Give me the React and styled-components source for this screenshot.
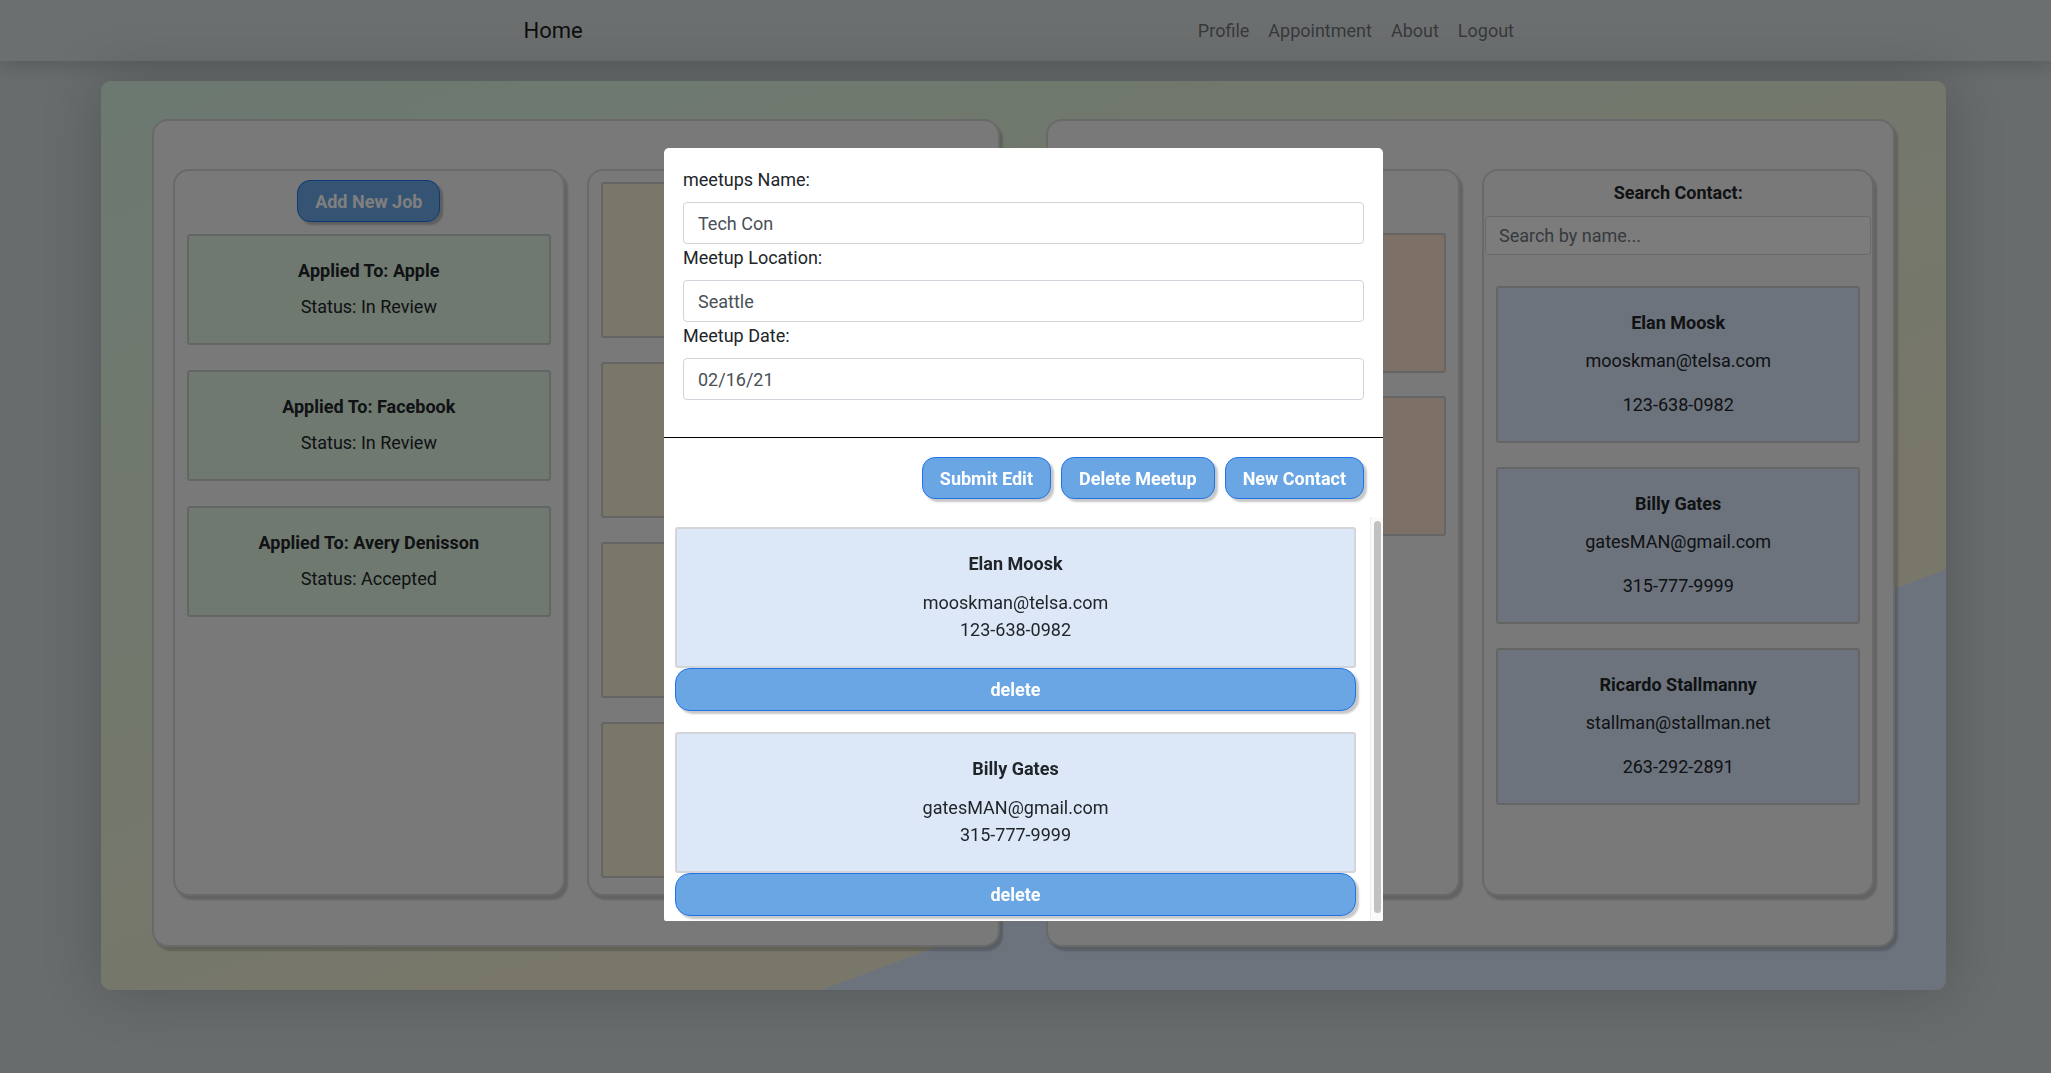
import React from 'react';
import styled, { createGlobalStyle } from 'styled-components';

const GlobalStyle = createGlobalStyle`
  * {
    box-sizing: border-box;
  }
  body {
    margin: 0;
    background: #d0d8da;
    font-family: Roboto, "Liberation Sans", Arial, sans-serif;
    color: #212529;
  }
`;

const Page = styled.div`
  min-height: 100vh;
`;

const NavBar = styled.nav`
  position: relative;
  height: 61px;
  background: #d6dee0;
  box-shadow: 0 4px 18px rgba(0, 0, 0, 0.16);
`;

const NavInner = styled.div`
  width: 1000px;
  height: 100%;
  margin: 0 auto;
  display: flex;
  align-items: center;
  justify-content: space-between;
  transform: translateX(-2px);
`;

const Brand = styled.a`
  font-size: 22px;
  color: rgba(0, 0, 0, 0.9);
  text-decoration: none;
`;

const NavLinks = styled.div`
  display: flex;
`;

const NavLink = styled.a`
  padding: 0 9.5px;
  font-size: 18px;
  color: rgba(0, 0, 0, 0.5);
  text-decoration: none;
`;

const Board = styled.main`
  width: 90%;
  height: 909px;
  margin: 20px auto 0;
  transform: translateX(-2px);
  padding: 38px 51px 43px;
  border-radius: 10px;
  background: linear-gradient(159.5deg, #d8f3e1 0%, #f3eed3 73.7%, #dae6f8 73.7%, #dae6f8 100%);
  box-shadow: 0 0 60px rgba(0, 0, 0, 0.2);
  display: grid;
  grid-template-columns: 1fr 1fr;
  grid-template-rows: minmax(0, 1fr);
  gap: 46px;
`;

const Panel = styled.section`
  display: flex;
  gap: 22px;
  padding: 48px 19px 49px;
  background: #f2f2f2;
  border: 2px solid #d2d2d2;
  border-radius: 16px;
  box-shadow: 3px 4px 2px rgba(0, 0, 0, 0.18);
`;

const Column = styled.div`
  flex: 1;
  display: flex;
  flex-direction: column;
  padding-top: ${(p) => p.$top || 9}px;
  background: #f2f2f2;
  border: 2px solid #d2d2d2;
  border-radius: 16px;
  box-shadow: 3px 4px 2px rgba(0, 0, 0, 0.18);
`;

const BlueButton = styled.button`
  height: ${(p) => p.$h || 42}px;
  padding: 0 17px;
  background: #6aa6e4;
  border: 1px solid #1f72e8;
  border-radius: 13px;
  box-shadow: 3px 3px 2px rgba(0, 0, 0, 0.22);
  color: #fff;
  font-family: inherit;
  font-size: 18px;
  font-weight: 700;
  cursor: pointer;
`;

const HeaderButton = styled(BlueButton)`
  align-self: center;
  margin-bottom: 12px;
`;

const ColumnTitle = styled.h4`
  margin: 0 0 10px;
  font-size: 18px;
  line-height: 26px;
  font-weight: 700;
  text-align: center;
`;

const SearchInput = styled.input`
  height: 39px;
  margin: 0 1px 31px;
  padding: 0 13px;
  background: #f9f9f9;
  border: 1px solid #d4d4d4;
  border-radius: 4px;
  font-family: inherit;
  font-size: 18px;
  color: #495057;

  &::placeholder {
    color: #6c757d;
  }
`;

const Card = styled.div`
  min-height: ${(p) => p.$minH || 0}px;
  margin: 0 12px ${(p) => p.$gap || 24}px;
  padding: 22px 16px ${(p) => p.$bottom || 23}px;
  background: ${(p) => p.$tone};
  border: 2px solid #cbcbcb;
  border-radius: 3px;
  text-align: center;

  &:last-child {
    margin-bottom: 0;
  }
`;

const CardTitle = styled.h5`
  margin: 0 0 ${(p) => p.$mb || 10}px;
  font-size: 18px;
  line-height: 26px;
  font-weight: 700;
`;

const CardText = styled.p`
  margin: 0 0 ${(p) => p.$mb || 0}px;
  font-size: 18px;
  line-height: 26px;
`;

const Backdrop = styled.div`
  position: fixed;
  inset: 0;
  background: rgba(0, 0, 0, 0.5);
`;

const Modal = styled.div`
  position: fixed;
  top: 148px;
  left: calc(50% - 361.5px);
  width: 719px;
  height: 773px;
  display: flex;
  flex-direction: column;
  background: #fff;
  border-radius: 5px 5px 2px 2px;
  overflow: hidden;
`;

const Form = styled.form`
  padding: 18px 19px 37px;
  border-bottom: 1px solid #000;
`;

const Label = styled.label`
  display: block;
  margin-bottom: 8px;
  font-size: 18px;
  line-height: 28px;
`;

const Field = styled.input`
  display: block;
  width: 100%;
  height: 42px;
  padding: 0 14px;
  border: 1px solid #ced4da;
  border-radius: 4px;
  font-family: inherit;
  font-size: 18px;
  color: #495057;
`;

const ButtonRow = styled.div`
  display: flex;
  justify-content: flex-end;
  gap: 10px;
  padding: 19px 19px 0;
`;

const ContactArea = styled.div`
  flex: 1;
  min-height: 0;
  margin-top: 18px;
  display: flex;
`;

const ContactList = styled.div`
  flex: 1;
  overflow: hidden;
  padding: 10px 14px 17px 11px;
`;

const ScrollTrack = styled.div`
  width: 13px;
  padding: 4px 2px 8px 3px;
  background: #fafafa;
  border-left: 1px solid #ececec;
`;

const ScrollThumb = styled.div`
  height: 100%;
  background: #c1c1c1;
  border-radius: 4px;
`;

const ContactBlock = styled.div`
  margin-bottom: 21px;

  &:last-child {
    margin-bottom: 0;
  }
`;

const ModalCard = styled.div`
  padding: 22px 16px 23px;
  background: #dce8f8;
  border: 2px solid #d3d5d9;
  border-radius: 3px;
  text-align: center;
`;

const ModalName = styled.h5`
  margin: 0 0 12px;
  font-size: 18px;
  line-height: 26px;
  font-weight: 700;
`;

const ModalLine = styled.p`
  margin: 0;
  font-size: 18px;
  line-height: 27px;
`;

const DeleteButton = styled(BlueButton)`
  display: block;
  width: 100%;
  border-radius: 15px;
`;

const jobs = [
  { company: 'Apple', status: 'In Review' },
  { company: 'Facebook', status: 'In Review' },
  { company: 'Avery Denisson', status: 'Accepted' },
];

const interviewCards = [1, 2, 3, 4];
const meetupCards = [1, 2];

const contacts = [
  { name: 'Elan Moosk', email: 'mooskman@telsa.com', phone: '123-638-0982' },
  { name: 'Billy Gates', email: 'gatesMAN@gmail.com', phone: '315-777-9999' },
  { name: 'Ricardo Stallmanny', email: 'stallman@stallman.net', phone: '263-292-2891' },
];

const App = () => (
  <Page>
    <GlobalStyle />
    <NavBar>
      <NavInner>
        <Brand href="#">Home</Brand>
        <NavLinks>
          <NavLink href="#">Profile</NavLink>
          <NavLink href="#">Appointment</NavLink>
          <NavLink href="#">About</NavLink>
          <NavLink href="#">Logout</NavLink>
        </NavLinks>
      </NavInner>
    </NavBar>

    <Board>
      <Panel>
        <Column>
          <HeaderButton>Add New Job</HeaderButton>
          {jobs.map((job) => (
            <Card key={job.company} $tone="#dff2e1" $gap={25}>
              <CardTitle>Applied To: {job.company}</CardTitle>
              <CardText>Status: {job.status}</CardText>
            </Card>
          ))}
        </Column>
        <Column $top={11}>
          {interviewCards.map((id) => (
            <Card key={id} $tone="#f4eed3" $minH={156} />
          ))}
        </Column>
      </Panel>

      <Panel>
        <Column $top={62}>
          {meetupCards.map((id) => (
            <Card key={id} $tone="#f9e0cf" $minH={140} $gap={23} />
          ))}
        </Column>
        <Column>
          <ColumnTitle>Search Contact:</ColumnTitle>
          <SearchInput placeholder="Search by name..." />
          {contacts.map((c) => (
            <Card key={c.name} $tone="#d9e6f9">
              <CardTitle $mb={12}>{c.name}</CardTitle>
              <CardText $mb={18}>{c.email}</CardText>
              <CardText>{c.phone}</CardText>
            </Card>
          ))}
        </Column>
      </Panel>
    </Board>

    <Backdrop />
    <Modal>
      <Form>
        <Label>meetups Name:</Label>
        <Field defaultValue="Tech Con" />
        <Label>Meetup Location:</Label>
        <Field defaultValue="Seattle" />
        <Label>Meetup Date:</Label>
        <Field defaultValue="02/16/21" />
      </Form>
      <ButtonRow>
        <BlueButton type="button">Submit Edit</BlueButton>
        <BlueButton type="button">Delete Meetup</BlueButton>
        <BlueButton type="button">New Contact</BlueButton>
      </ButtonRow>
      <ContactArea>
        <ContactList>
          {contacts.slice(0, 2).map((c) => (
            <ContactBlock key={c.name}>
              <ModalCard>
                <ModalName>{c.name}</ModalName>
                <ModalLine>{c.email}</ModalLine>
                <ModalLine>{c.phone}</ModalLine>
              </ModalCard>
              <DeleteButton type="button" $h={43}>
                delete
              </DeleteButton>
            </ContactBlock>
          ))}
        </ContactList>
        <ScrollTrack>
          <ScrollThumb />
        </ScrollTrack>
      </ContactArea>
    </Modal>
  </Page>
);

export default App;
